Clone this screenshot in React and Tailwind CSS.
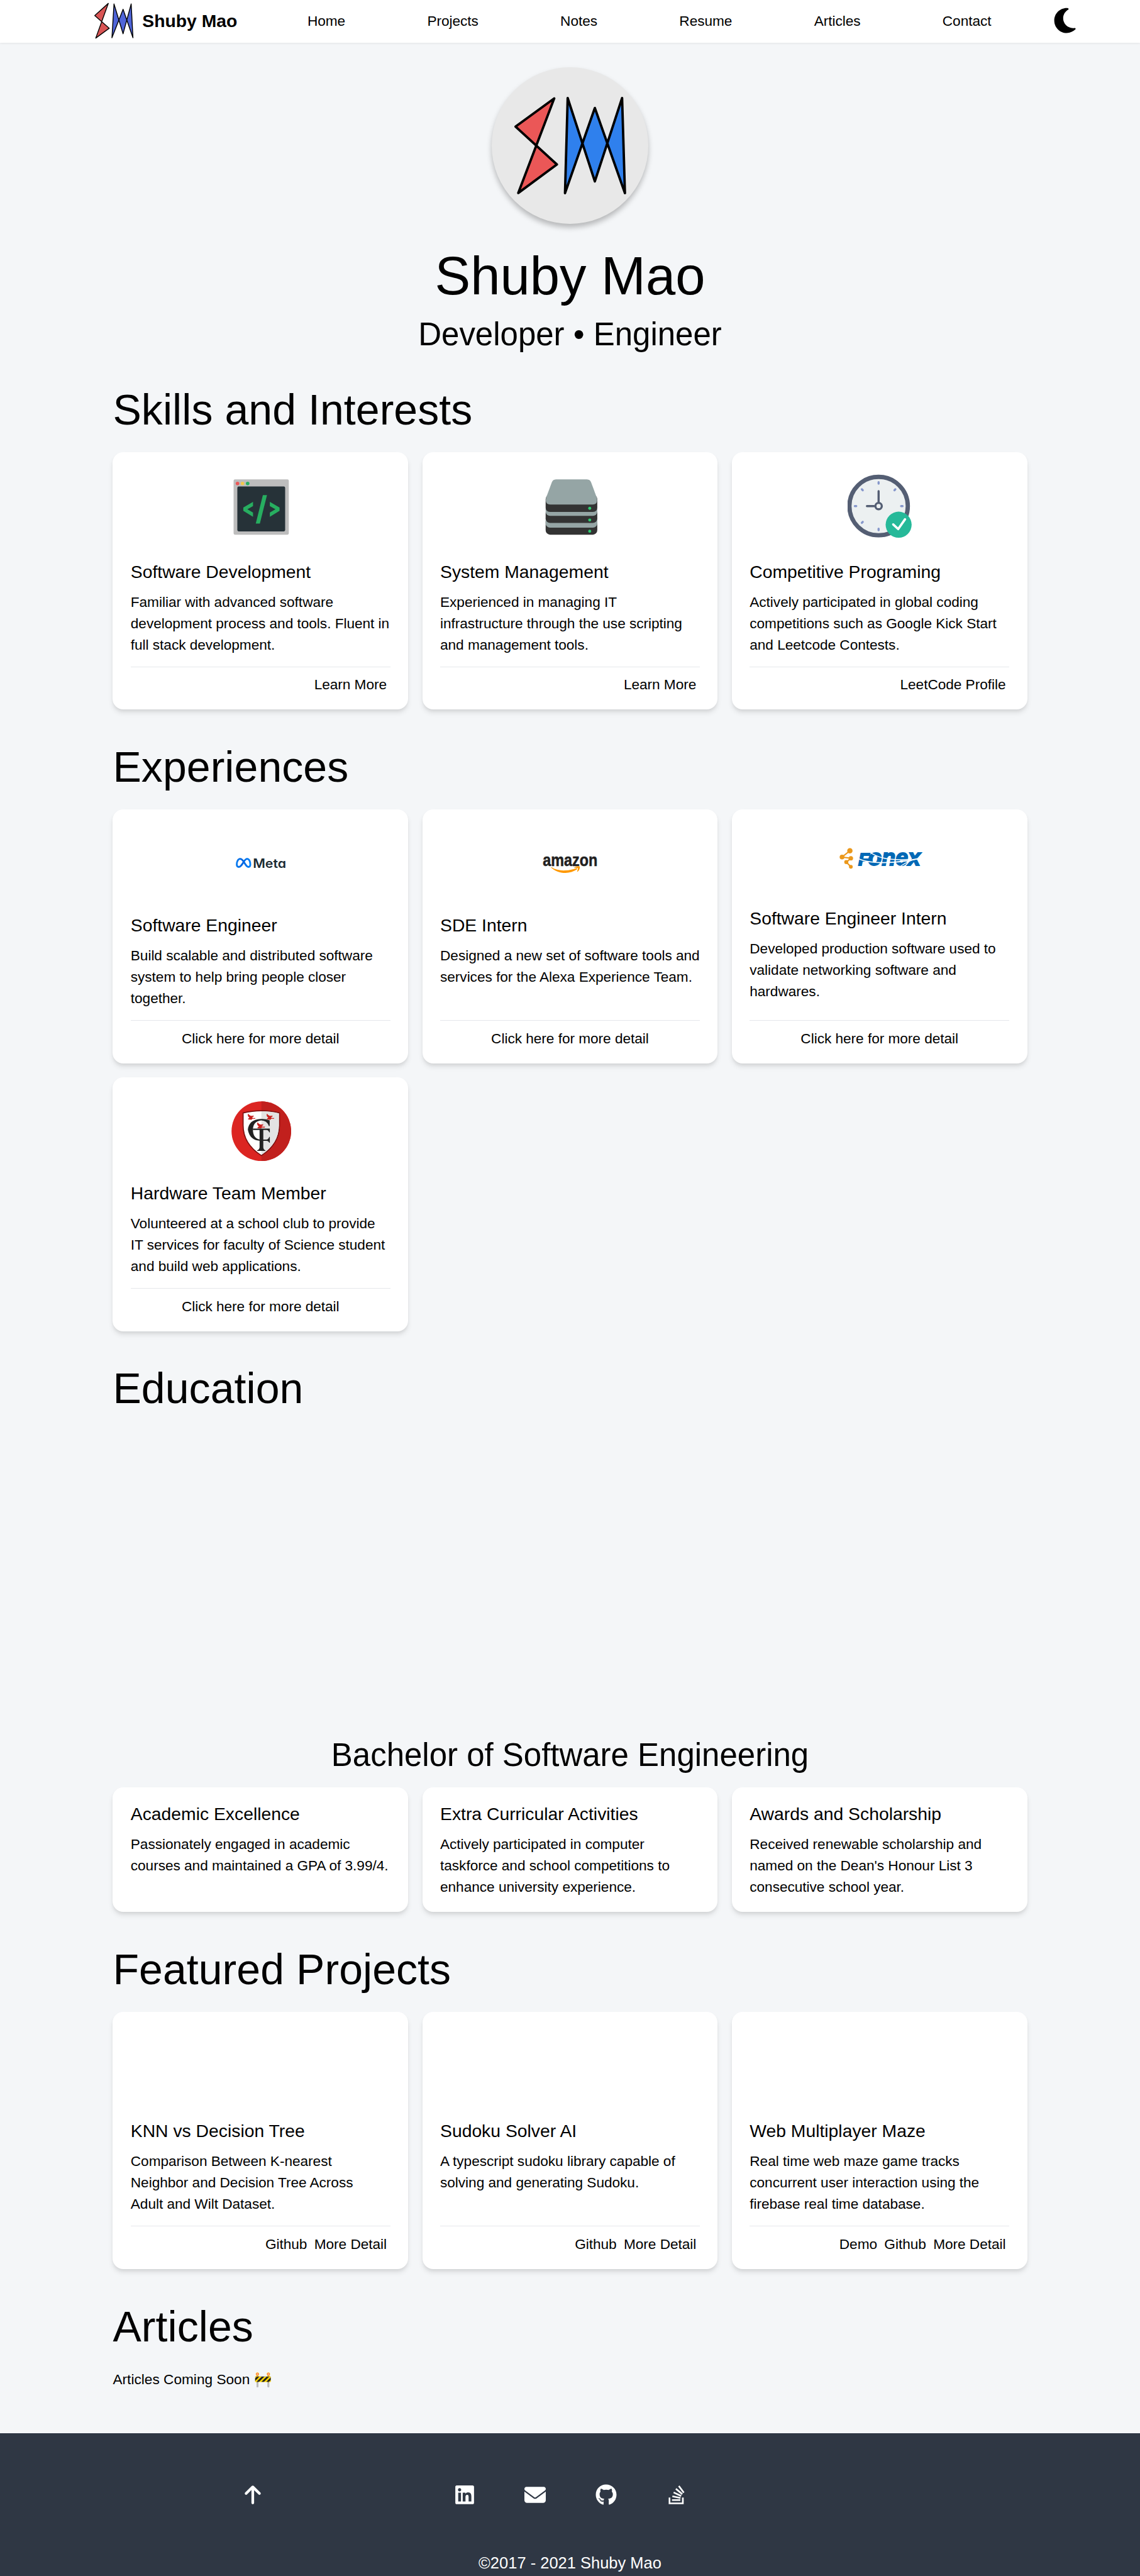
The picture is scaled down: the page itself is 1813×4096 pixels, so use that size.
import React from "react";
import {
  FaMoon,
  FaArrowUp,
  FaLinkedin,
  FaEnvelope,
  FaGithub,
  FaStackOverflow,
} from "react-icons/fa6";

const NAV = ["Home", "Projects", "Notes", "Resume", "Articles", "Contact"];

function BrandLogo() {
  return (
    <svg
      className="mt-[1px] h-[46px] w-[46px] shrink-0"
      viewBox="105 1 46 46"
      fill="none"
      stroke="#000"
      strokeWidth="1"
      strokeLinejoin="round"
    >
      <path d="M121.4 3.4 106.2 17 122.5 31.3 107.3 42.4Z" fill="#d95555" />
      <path d="M125.5 42 127.8 4 138 37.5 147.1 4 149.1 42 138 10Z" fill="#4f65d9" />
    </svg>
  );
}

function AvatarLogo() {
  return (
    <svg
      className="h-44 w-44 rounded-full bg-[#e8e8e8] shadow-[0_4px_6px_rgba(0,0,0,0.25)]"
      viewBox="552 75.7 176 176"
      stroke="#000"
      strokeWidth="2.7"
      strokeLinejoin="round"
    >
      <path d="M622.2 110.6 578.8 142.3 625.2 184.8 581.8 216.8Z" fill="#eb5757" />
      <path
        d="M634.3 217 637.3 110.2 667.8 203.8 698.4 110.2 701.6 217 667.8 121.4Z"
        fill="#2f80ed"
      />
    </svg>
  );
}

function TerminalArt() {
  return (
    <svg className="mt-2 h-[72px] w-[72px]" viewBox="0 0 72 72">
      <rect x="6" y="5.9" width="62" height="62" rx="1.5" fill="#bdbdbd" />
      <rect x="10.2" y="13.8" width="53.7" height="50.4" rx="1.5" fill="#263238" />
      <circle cx="10.4" cy="10.4" r="2" fill="#eb5757" />
      <circle cx="16" cy="10.4" r="2" fill="#f2c94c" />
      <circle cx="21.8" cy="10.4" r="2" fill="#27ae60" />
      <g fill="#27ae60">
        <path d="M27.8 31 16.9 37.5V41.2L27.8 47.9V43L21.5 39.3 27.8 35.8Z" />
        <path d="M46.7 31 57.6 37.5V41.2L46.7 47.9V43L53 39.3 46.7 35.8Z" />
        <path d="M38.9 23.5H43.5L35.5 55.5H30.9Z" />
      </g>
    </svg>
  );
}

function ServerArt() {
  return (
    <svg className="mt-2 h-[72px] w-[72px]" viewBox="0 0 72 72">
      <rect x="8.3" y="48" width="58" height="19.9" rx="5" fill="#333" />
      <rect x="8.3" y="45" width="58" height="15" rx="5" fill="#95a5a5" />
      <rect x="8.3" y="38" width="58" height="16.8" rx="5" fill="#333" />
      <rect x="8.3" y="33" width="58" height="13.8" rx="5" fill="#95a5a5" />
      <path d="M8.3 28Q8.5 26 10 24H64.6Q66.1 26 66.3 28V37.3Q66.3 42.3 61.3 42.3H13.3Q8.3 42.3 8.3 37.3Z" fill="#333" />
      <path d="M20 5.9H54.6Q58 5.9 59.3 9L65.8 26.5Q67.3 34.1 61 34.1H13.6Q7.3 34.1 8.8 26.5L15.3 9Q16.6 5.9 20 5.9Z" fill="#95a5a5" />
      <g fill="#2ecc71">
        <circle cx="57.8" cy="38.3" r="1.7" />
        <circle cx="57.8" cy="51.4" r="1.7" />
        <circle cx="57.8" cy="64" r="1.7" />
      </g>
    </svg>
  );
}

function ClockArt() {
  return (
    <svg className="mt-2 h-[72px] w-[72px]" viewBox="951.7 532 72 72" strokeLinecap="round">
      <circle cx="986.5" cy="567.8" r="32.8" fill="#ecf0f1" stroke="#545e73" strokeWidth="4.8" />
      <g stroke="#8697cb" strokeWidth="2.4">
        <path d="M986.5 541v1.6M986.5 593.2v1.6M959.8 567.8h1.6M1011.8 567.8h1.6M967.7 549l1 1M1005.3 549l-1 1M967.7 586.6l1-1" />
      </g>
      <path d="M986.5 551v12M973.4 567.8h8" stroke="#545e73" strokeWidth="2.4" />
      <circle cx="986.5" cy="567.8" r="3.6" fill="#ecf0f1" stroke="#545e73" strokeWidth="2.4" />
      <circle cx="1009" cy="588.7" r="14.6" fill="#26b999" />
      <path d="M1002.9 588.4 1008.5 593.6 1016.2 582.6" fill="none" stroke="#fff" strokeWidth="2.6" strokeLinejoin="round" />
    </svg>
  );
}

function MetaLogo() {
  return (
    <svg className="mt-[29px] h-[28px] w-[80px] overflow-visible" viewBox="252.4 954 80 28">
      <defs>
        <linearGradient id="meta-blue" x1="0" x2="1" y1="0" y2="0">
          <stop offset="0" stopColor="#0a7bf0" />
          <stop offset="0.4" stopColor="#0064e0" />
          <stop offset="1" stopColor="#0082fb" />
        </linearGradient>
      </defs>
      <path
        d="M273.1 967.2C271.6 964.9 270.4 964.3 269.2 964.3C266.9 964.3 265.5 967.6 265.5 970.6C265.5 972.5 266.4 973.4 267.8 973.4C269.8 973.4 271 971.4 273.1 967.9C275 964.9 276 964.3 277.2 964.3C279.5 964.3 280.7 967.6 280.7 970.6C280.7 972.5 279.8 973.4 278.6 973.4C276.7 973.4 275.5 971.1 273.1 967.2Z"
        fill="none"
        stroke="url(#meta-blue)"
        strokeWidth="2"
      />
      <text
        x="283.6"
        y="974.2"
        textLength="37.4"
        lengthAdjust="spacingAndGlyphs"
        fill="#1c2b33"
        className="font-['Inter'] text-[14.3px] font-semibold [font-feature-settings:'cv11']"
      >
        Meta
      </text>
    </svg>
  );
}

function AmazonLogo() {
  return (
    <svg className="mt-[25px] h-[40px] w-[80px] overflow-visible" viewBox="599.8 950 80 40">
      <text
        x="609.2"
        y="971.7"
        textLength="61.4"
        lengthAdjust="spacingAndGlyphs"
        fill="#221f1f"
        stroke="#221f1f"
        strokeWidth="0.4"
        className="font-['Liberation_Sans'] text-[20px] font-bold"
      >
        amazon
      </text>
      <path
        d="M618.8 973.1C623 976 628.5 977.2 634.6 976.9C639 976.7 643.6 975.7 647.2 974.2L647.9 975.5C644 978.2 639 979.7 634.6 979.7C628 979.6 622.4 977.2 618.4 973.6Z"
        fill="#ff9900"
      />
      <path
        d="M644.4 973.7C646.6 971.9 649.8 971.6 650.7 972.4C651.1 974 650.2 976.9 648.3 978.3L647.6 978C648.4 976.3 648.8 974.8 648.5 974.3C647.8 973.8 646.2 973.8 644.7 974.1Z"
        fill="#ff9900"
      />
    </svg>
  );
}

function FonexLogo() {
  return (
    <svg className="mt-[17px] h-[44px] w-[110px] overflow-visible" viewBox="932.7 942 110 44">
      <g fill="#eb981c" stroke="#eb981c">
        <path d="M953.6 955.3 944.8 962.3 954.7 963.7 949.6 968 954.7 973.2" fill="none" strokeWidth="1.5" />
        <g stroke="none">
          <circle cx="953.6" cy="955.3" r="3" />
          <circle cx="944.8" cy="962.3" r="2.7" />
          <circle cx="954.7" cy="963.7" r="2.5" />
          <circle cx="949.6" cy="968" r="2.3" />
          <circle cx="954.7" cy="973.2" r="2.1" />
        </g>
      </g>
      <g
        fill="#0068b5"
        stroke="#0068b5"
        strokeWidth="1.3"
        className="font-['Liberation_Sans'] font-bold italic"
      >
        <text x="963" y="972" textLength="12.5" lengthAdjust="spacingAndGlyphs" className="text-[20px]">
          F
        </text>
        <text x="974" y="972" textLength="59" lengthAdjust="spacingAndGlyphs" className="text-[26px]">
          onex
        </text>
      </g>
      <g fill="none" stroke="#fff">
        <path d="M963.5 964.2C976 970 1004 970 1030 964.2" strokeWidth="1.2" />
        <path d="M977 957.4C985 963 1000 966.5 1022 964.8" strokeWidth="1" />
        <path d="M1010 973C1015 970 1018 966.5 1030 964.4" strokeWidth="0.9" />
      </g>
    </svg>
  );
}

const BIRD =
  "M0 3 3-2 6 3 14 8 24 8 27 5V12L20 14 25 18 36 18 34 22 22 21 18 26 2 25V21L8 17 2 11Z";

function ShieldLogo() {
  return (
    <svg className="ml-0.5 mt-[10.5px] h-[67.3px] w-[67.3px]" viewBox="26 38 404 404">
      <circle cx="228" cy="240" r="201" fill="#dc2522" />
      <path d="M228 39A201 201 0 0 1 228 441Z" fill="#c1201d" />
      <path
        d="M105 117Q165 102 228 102Q291 102 350 117V200Q350 325 228 404Q105 325 105 200Z"
        fill="#fff"
        stroke="#7d1010"
        strokeWidth="7"
      />
      <path d="M228 106Q290 106 346 120V200Q346 322 228 399Z" fill="#e3e3e3" />
      <g fill="#c9201e">
        <path transform="translate(136 125) scale(1.45)" d={BIRD} />
        <path transform="translate(263 125) scale(1.45)" d={BIRD} />
        <path transform="translate(199 183) scale(1.5)" d={BIRD} />
      </g>
      <g fill="#222">
        <path d="M284 167V205H279Q265 168 228 167Q171 174 171 230Q171 287 218 297H262Q276 296 281 279H285V318H281Q276 305 262 305H222Q150 303 137 230Q143 163 222 158Q258 156 284 167Z" />
        <path d="M171 222H285V248H281Q277 233 262 232H241V350Q243 366 255 369V373H200V369Q213 366 216 350V232H171Z" />
      </g>
    </svg>
  );
}

const SKILLS = [
  {
    art: <TerminalArt />,
    title: "Software Development",
    lines: ["Familiar with advanced software", "development process and tools. Fluent in", "full stack development."],
    links: ["Learn More"],
  },
  {
    art: <ServerArt />,
    title: "System Management",
    lines: ["Experienced in managing IT", "infrastructure through the use scripting", "and management tools."],
    links: ["Learn More"],
  },
  {
    art: <ClockArt />,
    title: "Competitive Programing",
    lines: ["Actively participated in global coding", "competitions such as Google Kick Start", "and Leetcode Contests."],
    links: ["LeetCode Profile"],
  },
];

const EXPERIENCES = [
  {
    art: <MetaLogo />,
    title: "Software Engineer",
    lines: ["Build scalable and distributed software", "system to help bring people closer", "together."],
  },
  {
    art: <AmazonLogo />,
    title: "SDE Intern",
    lines: ["Designed a new set of software tools and", "services for the Alexa Experience Team."],
  },
  {
    art: <FonexLogo />,
    compact: true,
    title: "Software Engineer Intern",
    lines: ["Developed production software used to", "validate networking software and", "hardwares."],
  },
  {
    art: <ShieldLogo />,
    title: "Hardware Team Member",
    lines: ["Volunteered at a school club to provide", "IT services for faculty of Science student", "and build web applications."],
  },
];

const EDUCATION = [
  {
    title: "Academic Excellence",
    lines: ["Passionately engaged in academic", "courses and maintained a GPA of 3.99/4."],
  },
  {
    title: "Extra Curricular Activities",
    lines: ["Actively participated in computer", "taskforce and school competitions to", "enhance university experience."],
  },
  {
    title: "Awards and Scholarship",
    lines: ["Received renewable scholarship and", "named on the Dean's Honour List 3", "consecutive school year."],
  },
];

const PROJECTS = [
  {
    title: "KNN vs Decision Tree",
    lines: ["Comparison Between K-nearest", "Neighbor and Decision Tree Across", "Adult and Wilt Dataset."],
    links: ["Github", "More Detail"],
  },
  {
    title: "Sudoku Solver AI",
    lines: ["A typescript sudoku library capable of", "solving and generating Sudoku."],
    links: ["Github", "More Detail"],
  },
  {
    title: "Web Multiplayer Maze",
    lines: ["Real time web maze game tracks", "concurrent user interaction using the", "firebase real time database."],
    links: ["Demo", "Github", "More Detail"],
  },
];

function Card({ item, artHeight, center }) {
  return (
    <article className="flex flex-col rounded-xl bg-white px-5 pt-[16.5px] pb-[15.5px] shadow-[0_4px_6px_-1px_rgba(0,0,0,0.1),0_2px_4px_-1px_rgba(0,0,0,0.06)]">
      {artHeight && <div className={`flex shrink-0 justify-center ${artHeight}`}>{item.art}</div>}
      <h4 className="text-xl leading-7">{item.title}</h4>
      <p className="mt-2 mb-auto text-base leading-6 tracking-[-0.03px] whitespace-nowrap">
        {item.lines.map((line) => (
          <span key={line} className="block">
            {line}
          </span>
        ))}
      </p>
      {center && (
        <div className="mt-3 border-t border-gray-200 pt-[8.3px] text-center leading-6 tracking-[-0.03px]">
          Click here for more detail
        </div>
      )}
      {item.links && (
        <div className="mt-3 flex justify-end border-t border-gray-200 pt-[8.3px] leading-6 tracking-[-0.03px]">
          {item.links.map((label) => (
            <a key={label} className="mx-1">
              {label}
            </a>
          ))}
        </div>
      )}
    </article>
  );
}

function Heading({ children }) {
  return <h2 className="mt-10 mb-6 text-5xl leading-[48px] tracking-[0.05px]">{children}</h2>;
}

export default function App() {
  return (
    <div className="flex h-[2892px] w-full flex-col overflow-hidden bg-[#f4f6f8] font-['Liberation_Sans',Arial,sans-serif] text-black [zoom:1.41632]">
      <header className="flex h-12 shrink-0 items-center bg-white pl-[105px] shadow-[0_1px_3px_rgba(0,0,0,0.1)]">
        <div className="flex w-[240.2px] shrink-0 items-center">
          <BrandLogo />
          <span className="ml-[8.8px] text-xl leading-7 font-bold">Shuby Mao</span>
        </div>
        <nav className="flex w-[768px] shrink-0 justify-between text-base leading-6 tracking-[-0.03px]">
          {NAV.map((label) => (
            <a key={label}>{label}</a>
          ))}
        </nav>
        <FaMoon className="ml-[66.8px] -mt-[2px] shrink-0" size={32} />
      </header>

      <main className="mx-auto flex w-[1026.67px] grow flex-col">
        <section className="flex flex-col items-center pt-[27.4px]">
          <AvatarLogo />
          <h1 className="mt-[28px] text-6xl leading-[60px]">Shuby Mao</h1>
          <p className="mt-[16.4px] text-4xl leading-10">Developer • Engineer</p>
        </section>

        <Heading>Skills and Interests</Heading>
        <div className="grid grid-cols-3 gap-4">
          {SKILLS.map((item) => (
            <Card key={item.title} item={item} artHeight="h-[104px]" />
          ))}
        </div>

        <Heading>Experiences</Heading>
        <div className="grid grid-cols-3 gap-4">
          {EXPERIENCES.map((item) => (
            <Card key={item.title} item={item} artHeight={item.compact ? "h-[92px] pl-0.5" : "h-[100px]"} center />
          ))}
        </div>

        <Heading>Education</Heading>
        <div className="h-[344px] shrink-0" />
        <h3 className="mb-4 text-center text-4xl leading-10">Bachelor of Software Engineering</h3>
        <div className="grid grid-cols-3 gap-4">
          {EDUCATION.map((item) => (
            <Card key={item.title} item={item} />
          ))}
        </div>

        <Heading>Featured Projects</Heading>
        <div className="grid grid-cols-3 gap-4">
          {PROJECTS.map((item) => (
            <Card key={item.title} item={item} artHeight="h-[104px]" />
          ))}
        </div>

        <Heading>Articles</Heading>
        <p className="text-base leading-6">Articles Coming Soon 🚧</p>
      </main>

      <footer className="flex h-40 shrink-0 flex-col bg-[#2f3744] text-white">
        <div className="mt-[57px] flex items-center pl-[272px]">
          <FaArrowUp size={24} />
          <div className="ml-[213.5px] flex gap-[55.5px]">
            <FaLinkedin size={24} />
            <FaEnvelope size={24} />
            <FaGithub size={24} />
            <FaStackOverflow size={24} />
          </div>
        </div>
        <p className="mt-[51px] text-center text-lg leading-7">©2017 - 2021 Shuby Mao</p>
      </footer>
    </div>
  );
}
